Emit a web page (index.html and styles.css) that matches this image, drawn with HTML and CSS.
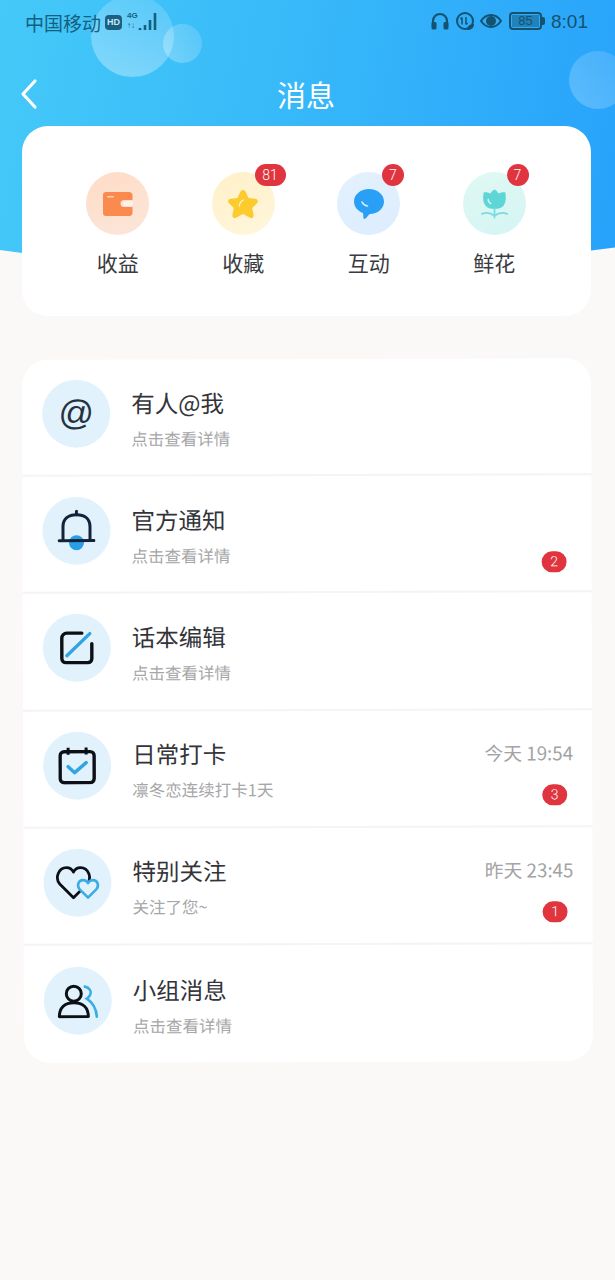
FILE: index.html
```html
<!DOCTYPE html>
<html lang="zh-CN">
<head>
    <meta charset="UTF-8">
    <meta name="viewport" content="width=device-width, initial-scale=1.0">
    <title>消息</title>
    <link rel="stylesheet" href="styles.css">
</head>
<body>
    <div class="page">
        <header class="hero">
            <div class="bubble bubble-big"></div>
            <div class="bubble bubble-small"></div>
            <div class="bubble bubble-right"></div>

            <div class="status-bar">
                <div class="status-left">
                    <span>中国移动</span>
                    <span class="hd">HD</span>
                    <span class="net">
                        <span class="net-type">4G<br>↑↓</span>
                        <svg width="20" height="20" viewBox="0 0 20 20"><path d="M2 19v-2M7 19v-5M12 19V9M17 19V2" stroke="#14607f" stroke-width="2.600"/></svg>
                    </span>
                </div>
                <div class="status-right">
                    <svg width="20" height="20" viewBox="0 0 20 20" fill="none"><path d="M3 15V10a7 7 0 0 1 14 0v5" stroke="#14526f" stroke-width="2.200"/><rect x="1.500" y="11" width="5" height="7.500" rx="1.500" fill="#14526f"/><rect x="13.500" y="11" width="5" height="7.500" rx="1.500" fill="#14526f"/></svg>
                    <svg width="20" height="20" viewBox="0 0 20 20" fill="none"><circle cx="10" cy="10" r="8" stroke="#14526f" stroke-width="2"/><path d="M7 6.500v7M7 6.500 5.500 8M11 6v7.500M11 13.500l1.500-1.500" stroke="#14526f" stroke-width="1.500"/><path d="M12 19c0-4 3-6 7-6 0 4-3 6-7 6z" fill="#14526f"/></svg>
                    <svg width="22" height="16" viewBox="0 0 22 16" fill="none"><path d="M1 8c3-4.500 6-6 10-6s7 1.500 10 6c-3 4.500-6 6-10 6S4 12.500 1 8z" stroke="#14526f" stroke-width="2"/><circle cx="11" cy="8" r="5" fill="#14526f"/></svg>
                    <span class="battery"><span class="battery-level">85</span></span>
                    <span class="battery-tip"></span>
                    <span class="clock">8:01</span>
                </div>
            </div>

            <div class="nav">
                <svg class="back" width="20" height="32" viewBox="0 0 20 32" fill="none"><path d="M16 3 4 16l12 13" stroke="#fff" stroke-width="3.200" stroke-linecap="round" stroke-linejoin="round"/></svg>
                <h1 class="nav-title">消息</h1>
            </div>
        </header>

        <section class="shortcuts">
            <div class="shortcut">
                <div class="shortcut-icon tint-orange">
                    <svg width="30" height="24" viewBox="0 0 30 24"><path d="M3 0h23a3.500 3.500 0 0 1 3.500 3.500V8H21a3.500 3.500 0 0 0 0 7h8.500v5.500A3.500 3.500 0 0 1 26 24H3a3 3 0 0 1-3-3V3a3 3 0 0 1 3-3z" fill="#fb8a4e"/><rect x="20" y="9" width="10" height="5" rx="2.500" fill="#fdf1e8"/><rect x="4" y="4" width="7" height="1.600" rx=".8" fill="#fcd3b8"/></svg>
                </div>
                <span class="shortcut-label">收益</span>
            </div>
            <div class="shortcut">
                <div class="shortcut-icon tint-yellow">
                    <svg width="32" height="30" viewBox="0 0 32 30"><path d="M16 1c1.500 0 2.300 1 3 2.500l2.500 5.500 6.500.8c3 .4 3.800 2.700 1.800 4.700l-4.600 4.500 1.300 6.500c.5 3-1.500 4.300-4 3l-6.500-3.500-6.500 3.500c-2.500 1.300-4.500 0-4-3l1.300-6.500-4.600-4.500c-2-2-1.200-4.300 1.800-4.700l6.500-.8L13 3.500C13.700 2 14.500 1 16 1z" fill="#fccb2e"/><path d="M12.500 17c0-3 1.500-5 4-6" stroke="#fff3c4" stroke-width="1.300" fill="none" stroke-linecap="round"/></svg>
                </div>
                <span class="count count-wide">81</span>
                <span class="shortcut-label">收藏</span>
            </div>
            <div class="shortcut">
                <div class="shortcut-icon tint-blue">
                    <svg width="30" height="30" viewBox="0 0 30 30"><path d="M15 0c8.300 0 15 5.500 15 12.500S23.500 25 16 25c-1 0-4 5-5.500 5S9.500 27 9 24C3.500 22 0 17.500 0 12.500 0 5.500 6.700 0 15 0z" fill="#2a9ff6"/><path d="M8 13c1 2.200 2.800 3.600 5.500 4" stroke="#d9f0ff" stroke-width="1.600" fill="none" stroke-linecap="round"/></svg>
                </div>
                <span class="count count-chat">7</span>
                <span class="shortcut-label">互动</span>
            </div>
            <div class="shortcut">
                <div class="shortcut-icon tint-green">
                    <svg width="27" height="30" viewBox="0 0 30 32"><path d="M15 0c2 1 3.500 2.500 4.500 4.500C21.500 3 24 2.500 27 3c1 6 1 11-2 15-2 2.500-6 3.500-10 3.500S7 20.500 5 18C2 14 2 9 3 3c3-.5 5.500 0 7.500 1.500C11.500 2.500 13 1 15 0z" fill="#5fd6d6"/><path d="M8 11c0 2 1 3.500 3 4.500" stroke="#e3fafa" stroke-width="1.500" fill="none" stroke-linecap="round"/><path d="M15 21v10M1 27c5-2 10-1 14 2 4-3 9-4 14-2" stroke="#7adcdc" stroke-width="2" fill="none" stroke-linecap="round"/></svg>
                </div>
                <span class="count count-flower">7</span>
                <span class="shortcut-label">鲜花</span>
            </div>
        </section>

        <main class="list">
            <div class="row">
                <div class="row-icon at-sign">@</div>
                <div class="row-text">
                    <div class="row-title">有人@我</div>
                    <div class="row-sub">点击查看详情</div>
                </div>
            </div>
            <div class="row">
                <div class="row-icon">
                    <svg width="38" height="42" viewBox="0 0 38 42" fill="none"><circle cx="19" cy="33" r="7.500" fill="#2a9fe6"/><path d="M5.500 31V17C5.500 9 11 5 19 5s13.500 4 13.500 12v14" stroke="#16213a" stroke-width="3"/><path d="M19 1.500V5" stroke="#16213a" stroke-width="3" stroke-linecap="round"/><path d="M1.500 31h35" stroke="#16213a" stroke-width="3" stroke-linecap="round"/></svg>
                </div>
                <div class="row-text">
                    <div class="row-title">官方通知</div>
                    <div class="row-sub">点击查看详情</div>
                </div>
                <span class="row-badge row-badge-low">2</span>
            </div>
            <div class="row">
                <div class="row-icon">
                    <svg width="36" height="36" viewBox="0 0 36 36" fill="none"><path d="M23 3.500H8a5 5 0 0 0-5 5V29a4 4 0 0 0 4 4h22a4 4 0 0 0 4-4V14" stroke="#0c0f16" stroke-width="3.400" stroke-linecap="round"/><path d="M8 26 31 4" stroke="#30a5e2" stroke-width="3.400" stroke-linecap="round"/></svg>
                </div>
                <div class="row-text">
                    <div class="row-title">话本编辑</div>
                    <div class="row-sub">点击查看详情</div>
                </div>
            </div>
            <div class="row">
                <div class="row-icon">
                    <svg width="38" height="38" viewBox="0 0 38 38" fill="none"><rect x="2" y="5" width="34" height="31" rx="4" stroke="#0c0f16" stroke-width="3.400"/><path d="M10 1v7M28 1v7" stroke="#0c0f16" stroke-width="3"/><path d="M10 20l6.500 6L28 16" stroke="#30a5e2" stroke-width="3.400" stroke-linecap="round" stroke-linejoin="round"/></svg>
                </div>
                <div class="row-text">
                    <div class="row-title">日常打卡</div>
                    <div class="row-sub">凛冬恋连续打卡1天</div>
                </div>
                <span class="row-time">今天 19:54</span>
                <span class="row-badge">3</span>
            </div>
            <div class="row">
                <div class="row-icon">
                    <svg width="45" height="34" viewBox="0 0 45 34" fill="none"><path d="M18 32 4.500 18.500C-1 12.500 3 2 11 2c3 0 5.500 1.500 7 4.500C19.500 3.500 22 2 25 2c8 0 12 10.500 6.500 16.500z" stroke="#0c0f16" stroke-width="2.800" stroke-linejoin="round"/><path d="M32.500 32 24 23.500c-3-3.500-1-9 3.500-9 2 0 4 1 5 3 1-2 3-3 5-3 4.500 0 6.500 5.500 3.500 9z" stroke="#3aaee4" stroke-width="2.600" stroke-linejoin="round" fill="#e1f2fc"/></svg>
                </div>
                <div class="row-text">
                    <div class="row-title">特别关注</div>
                    <div class="row-sub">关注了您~</div>
                </div>
                <span class="row-time">昨天 23:45</span>
                <span class="row-badge">1</span>
            </div>
            <div class="row">
                <div class="row-icon">
                    <svg width="42" height="35" viewBox="0 0 42 35" fill="none"><circle cx="17" cy="10" r="7.500" stroke="#0c0f16" stroke-width="3"/><path d="M2.500 33C2.500 24 8 19 17 19s14.500 5 14.500 14z" stroke="#0c0f16" stroke-width="3" stroke-linejoin="round"/><path d="M28 3c5 1 7 5 5.500 8-1 2-2.500 3.500-3.500 4 6 4 9.500 11 10 18" stroke="#3aaee4" stroke-width="2.600" stroke-linecap="round"/></svg>
                </div>
                <div class="row-text">
                    <div class="row-title">小组消息</div>
                    <div class="row-sub">点击查看详情</div>
                </div>
            </div>
        </main>
    </div>
</body>
</html>
```

FILE: styles.css
```css
* {
    margin: 0;
    padding: 0;
    box-sizing: border-box;
}

body {
    font-family: "Noto Sans CJK SC", "Noto Sans", sans-serif;
    background-color: #fbf8f8;
    color: #33343a;
}

.page {
    width: 615px;
    height: 1280px;
    overflow: hidden;
    position: relative;
}

.hero {
    height: 280px;
    position: relative;
    overflow: hidden;
    background: linear-gradient(100deg, #45c9f8 0%, #38b9f9 45%, #27a2fb 100%);
    clip-path: path("M0 0H615V247.500L591 250.500V270H22V253L0 250Z");
}

.bubble {
    position: absolute;
    border-radius: 50%;
}

.bubble-big {
    left: 91px;
    top: -5px;
    width: 83px;
    height: 82px;
    background: linear-gradient(200deg, rgba(255, 255, 255, 0.12), rgba(255, 255, 255, 0.36));
}

.bubble-small {
    left: 163px;
    top: 24px;
    width: 39px;
    height: 39px;
    background: linear-gradient(240deg, rgba(255, 255, 255, 0.12), rgba(255, 255, 255, 0.3));
}

.bubble-right {
    left: 569px;
    top: 51px;
    width: 58px;
    height: 58px;
    background: linear-gradient(45deg, rgba(255, 255, 255, 0.24), rgba(255, 255, 255, 0.12));
}

.status-bar {
    position: relative;
    display: flex;
    justify-content: space-between;
    align-items: center;
    height: 44px;
    padding: 0 27px 0 25px;
    color: #14607f;
}

.status-left {
    display: flex;
    align-items: center;
    gap: 4px;
    font-size: 19px;
}

.hd {
    background: #1d5f80;
    color: #bfeaff;
    font-family: "Liberation Sans", sans-serif;
    font-size: 9px;
    font-weight: 700;
    width: 17px;
    height: 15px;
    line-height: 15px;
    border-radius: 4px;
    text-align: center;
}

.net {
    display: flex;
    align-items: flex-end;
    margin: -3px 0 0 1px;
}

.net-type {
    font-family: "Liberation Sans", sans-serif;
    font-size: 8px;
    font-weight: 700;
    line-height: 10px;
}

.status-right {
    display: flex;
    align-items: center;
    gap: 5px;
    color: #14526f;
    margin-top: -3px;
}

.battery {
    margin-left: 2px;
    width: 33px;
    height: 18px;
    border: 2px solid #14526f;
    border-radius: 4px;
    padding: 1px;
    display: flex;
}

.battery-level {
    flex: 1;
    background: rgba(20, 82, 111, 0.45);
    font-family: "Liberation Sans", sans-serif;
    font-size: 13px;
    line-height: 12px;
    text-align: center;
}

.battery-tip {
    width: 3px;
    height: 8px;
    margin-left: -5px;
    background: #14526f;
    border-radius: 0 2px 2px 0;
}

.clock {
    margin-left: 1px;
    font-family: "Liberation Sans", sans-serif;
    font-size: 19px;
    margin-top: 3px;
}

.nav {
    position: relative;
    display: flex;
    justify-content: center;
    align-items: center;
    height: 50px;
    margin-top: 25px;
    padding-right: 3px;
}

.back {
    position: absolute;
    left: 19px;
    top: 9px;
}

.nav-title {
    color: #fff;
    font-size: 29px;
    font-weight: 400;
}

.shortcuts {
    position: absolute;
    left: 22px;
    top: 126px;
    width: 569px;
    height: 190px;
    background: #fff;
    border-radius: 26px;
    display: flex;
    padding: 46px 0 0 33px;
}

.shortcut {
    position: relative;
    width: 125.500px;
    display: flex;
    flex-direction: column;
    align-items: center;
    gap: 12px;
    flex: none;
}

.shortcut-icon {
    width: 63px;
    height: 63px;
    border-radius: 50%;
    display: flex;
    align-items: center;
    justify-content: center;
}

.tint-orange {
    background: linear-gradient(160deg, #ffdcc6, #fbe6da);
}

.tint-yellow {
    background: linear-gradient(160deg, #fff0c8, #fff6dc);
}

.tint-blue {
    background: linear-gradient(160deg, #e3f1fc, #dcedff);
}

.tint-green {
    background: linear-gradient(160deg, #e0f9f3, #d4f4f4);
}

.shortcut-label {
    font-size: 21px;
    line-height: 30px;
    color: #3a3b40;
}

.count {
    position: absolute;
    top: -8px;
    height: 22px;
    line-height: 22px;
    border-radius: 11px;
    background: #e0343f;
    color: #fff;
    font-size: 14px;
    font-weight: 300;
    text-align: center;
    font-family: "Roboto", sans-serif;
}

.count-wide {
    left: 74px;
    width: 31px;
}

.count-chat {
    left: 76px;
    width: 22px;
}

.count-flower {
    left: 75px;
    width: 22px;
}

.list {
    position: absolute;
    left: 23px;
    top: 359px;
    width: 569px;
    height: 703px;
    background: #fff;
    border-radius: 26px;
    transform: rotate(-0.16deg);
}

.row {
    position: relative;
    height: 117.200px;
    display: flex;
    align-items: center;
    padding: 0 0 2px 20px;
    border-bottom: 2px solid #f5f3f3;
}

.row:last-child {
    border-bottom: none;
}

.row-icon {
    flex: none;
    width: 68px;
    height: 68px;
    margin-bottom: 5px;
    border-radius: 50%;
    background: #e1f2fc;
    display: flex;
    align-items: center;
    justify-content: center;
}

.row-icon svg {
    display: block;
}

.at-sign {
    font-family: "Liberation Sans", sans-serif;
    font-size: 35px;
    color: #25323f;
    padding-bottom: 2px;
}

.row-text {
    margin-left: 21px;
    padding-top: 4px;
}

.row-title {
    font-size: 23.500px;
    line-height: 32px;
    color: #33343a;
}

.row-sub {
    font-size: 16.500px;
    line-height: 24px;
    margin-top: 8px;
    color: #a6a6a8;
}

.row-time {
    position: absolute;
    right: 19px;
    top: 30px;
    font-size: 18.800px;
    line-height: 24px;
    color: #a3a3a5;
}

.row-badge {
    position: absolute;
    right: 25px;
    top: 74px;
    width: 25px;
    height: 21px;
    line-height: 21px;
    border-radius: 11px;
    background: #e0343f;
    color: #fff;
    font-size: 14px;
    font-weight: 300;
    text-align: center;
    font-family: "Roboto", sans-serif;
}

.row-badge-low {
    top: 76px;
}
```
